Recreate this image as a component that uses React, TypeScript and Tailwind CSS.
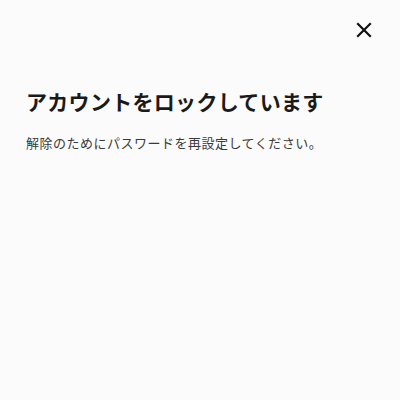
export default function App() {
  return (
    <div
      className="w-[400px] h-[400px] bg-[#fbfbfb] text-[#1a1a1a] flex flex-col"
      style={{ fontFamily: '"Noto Sans CJK JP", "Noto Sans", sans-serif' }}
    >
      <div className="flex justify-end pt-[20px] pr-[26px]">
        <button className="w-[20px] h-[20px] flex items-center justify-center" aria-label="閉じる">
          <svg width="16" height="16" viewBox="0 0 16 16" fill="none" stroke="#111" strokeWidth="2.2" strokeLinecap="square">
            <path d="M2 2L14 14M14 2L2 14" />
          </svg>
        </button>
      </div>
      <div className="px-[26px] pt-[46px]">
        <h1 className="text-[21px] leading-[30px] font-bold tracking-[0.3px]">アカウントをロックしています</h1>
        <p className="mt-[18px] text-[13px] leading-[18px] text-[#3a3a3a] tracking-[0.5px]">
          解除のためにパスワードを再設定してください。
        </p>
      </div>
    </div>
  );
}
